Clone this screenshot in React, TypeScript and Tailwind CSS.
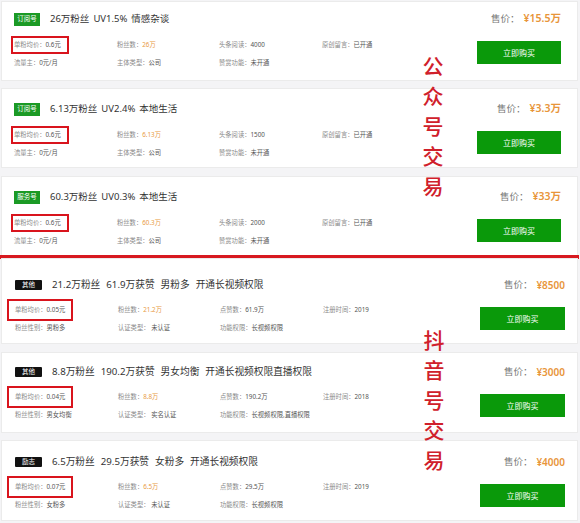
import React from 'react';

interface Cell {
  label: string;
  value: string;
  orange?: boolean;
  boxed?: boolean;
}

interface Listing {
  tag: string;
  tagClass: string;
  title: string[];
  price: string;
  rows: Cell[][];
  cardClass: string;
}

const wechat: Listing[] = [
  {
    tag: '订阅号',
    tagClass: 'bg-[#1b9a25] h-[13px] w-[26px]',
    title: ['26万粉丝', 'UV1.5%', '情感杂谈'],
    price: '¥15.5万',
    cardClass: 'pt-[11px] pb-[12px]',
    rows: [
      [
        { label: '单粉均价：', value: '0.6元', boxed: true },
        { label: '粉丝数：', value: '26万', orange: true },
        { label: '头条阅读：', value: '4000' },
        { label: '原创留言：', value: '已开通' },
      ],
      [
        { label: '流量主：', value: '0元/月' },
        { label: '主体类型：', value: '公司' },
        { label: '赞赏功能：', value: '未开通' },
      ],
    ],
  },
  {
    tag: '订阅号',
    tagClass: 'bg-[#1b9a25] h-[13px] w-[26px]',
    title: ['6.13万粉丝', 'UV2.4%', '本地生活'],
    price: '¥3.3万',
    cardClass: 'mt-[9px] pt-[14px] pb-[9px]',
    rows: [
      [
        { label: '单粉均价：', value: '0.6元', boxed: true },
        { label: '粉丝数：', value: '6.13万', orange: true },
        { label: '头条阅读：', value: '1500' },
        { label: '原创留言：', value: '已开通' },
      ],
      [
        { label: '流量主：', value: '0元/月' },
        { label: '主体类型：', value: '公司' },
        { label: '赞赏功能：', value: '未开通' },
      ],
    ],
  },
  {
    tag: '服务号',
    tagClass: 'bg-[#1b9a25] h-[13px] w-[26px]',
    title: ['60.3万粉丝', 'UV0.3%', '本地生活'],
    price: '¥33万',
    cardClass: 'mt-[10px] pt-[14px] pb-[9px]',
    rows: [
      [
        { label: '单粉均价：', value: '0.6元', boxed: true },
        { label: '粉丝数：', value: '60.3万', orange: true },
        { label: '头条阅读：', value: '2000' },
        { label: '原创留言：', value: '已开通' },
      ],
      [
        { label: '流量主：', value: '0元/月' },
        { label: '主体类型：', value: '公司' },
        { label: '赞赏功能：', value: '未开通' },
      ],
    ],
  },
];

const douyin: Listing[] = [
  {
    tag: '其他',
    tagClass: 'bg-[#111] h-[10px] w-[27px] rounded-[1px]',
    title: ['21.2万粉丝', '61.9万获赞', '男粉多', '开通长视频权限'],
    price: '¥8500',
    cardClass: 'pt-[20px] pb-[10px]',
    rows: [
      [
        { label: '单粉均价：', value: '0.05元', boxed: true },
        { label: '粉丝数：', value: '21.2万', orange: true },
        { label: '点赞数：', value: '61.9万' },
        { label: '注册时间：', value: '2019' },
      ],
      [
        { label: '粉丝性别：', value: '男粉多' },
        { label: '认证类型： ', value: '未认证' },
        { label: '功能权限：', value: '长视频权限' },
      ],
    ],
  },
  {
    tag: '其他',
    tagClass: 'bg-[#111] h-[10px] w-[27px] rounded-[1px]',
    title: ['8.8万粉丝', '190.2万获赞', '男女均衡', '开通长视频权限直播权限'],
    price: '¥3000',
    cardClass: 'mt-[10px] pt-[13px] pb-[12px]',
    rows: [
      [
        { label: '单粉均价：', value: '0.04元', boxed: true },
        { label: '粉丝数：', value: '8.8万', orange: true },
        { label: '点赞数：', value: '190.2万' },
        { label: '注册时间：', value: '2018' },
      ],
      [
        { label: '粉丝性别：', value: '男女均衡' },
        { label: '认证类型： ', value: '实名认证' },
        { label: '功能权限：', value: '长视频权限,直播权限' },
      ],
    ],
  },
  {
    tag: '励志',
    tagClass: 'bg-[#111] h-[10px] w-[27px] rounded-[1px]',
    title: ['6.5万粉丝', '29.5万获赞', '女粉多', '开通长视频权限'],
    price: '¥4000',
    cardClass: 'mt-[9px] pt-[15px] pb-[10px]',
    rows: [
      [
        { label: '单粉均价：', value: '0.07元', boxed: true },
        { label: '粉丝数：', value: '6.5万', orange: true },
        { label: '点赞数：', value: '29.5万' },
        { label: '注册时间：', value: '2019' },
      ],
      [
        { label: '粉丝性别：', value: '女粉多' },
        { label: '认证类型： ', value: '未认证' },
        { label: '功能权限：', value: '长视频权限' },
      ],
    ],
  },
];

const ListingCard: React.FC<{ item: Listing; variant: 'wechat' | 'douyin' }> = ({ item, variant }) => {
  const isWechat = variant === 'wechat';
  return (
    <div
      className={`flex items-start bg-white shadow-[0_0_0_1px_#ebebeb] ${item.cardClass} ${
        isWechat ? 'pl-[12px] pr-[16px]' : 'pl-[13px] pr-[12px]'
      }`}
    >
      {/* Left: title + attributes */}
      <div className="flex-1 min-w-0">
        <div className="h-[12px] flex items-center gap-[10px]">
          <span
            className={`${item.tagClass} flex items-center justify-center text-white text-[6.5px] leading-none shrink-0`}
          >
            {item.tag}
          </span>
          <span
            className={`flex items-center text-[#333] whitespace-nowrap ${
              isWechat ? 'text-[9.5px] gap-[4px]' : 'text-[9.7px] gap-[6px]'
            }`}
          >
            {item.title.map((t) => (
              <span key={t}>{t}</span>
            ))}
          </span>
        </div>
        <div
          className={`grid grid-cols-[103px_102px_103px_auto] gap-y-[8px] text-[6.3px] leading-[10px] whitespace-pre ${
            isWechat ? 'mt-[15px]' : 'mt-[14px]'
          }`}
        >
          {item.rows.map((row, ri) =>
            [0, 1, 2, 3].map((ci) => {
              const cell = row[ci];
              if (!cell) return <span key={`${ri}-${ci}`} />;
              return (
                <span key={`${ri}-${ci}`}>
                  <span className="relative inline-block">
                    <span className="text-[#8a8a8a]">{cell.label}</span>
                    <span className={cell.orange ? 'text-[#e89a3f]' : 'text-[#555]'}>{cell.value}</span>
                    {cell.boxed && (
                      <span
                        className={`absolute border-[2.5px] border-[#d9141d] ${
                          isWechat
                            ? '-left-[3px] -right-[8px] -top-[4px] -bottom-[4px]'
                            : '-left-[8px] -right-[8px] -top-[6px] -bottom-[6px]'
                        }`}
                      />
                    )}
                  </span>
                </span>
              );
            })
          )}
        </div>
      </div>

      {/* Right: price + buy button */}
      <div className="flex flex-col items-end shrink-0">
        <div className="h-[12px] flex items-center gap-[4px] whitespace-nowrap">
          <span className="text-[9.5px] text-[#777]">售价：</span>
          <span
            className={`font-semibold text-[#e8953a] ${isWechat ? 'text-[10.5px]' : 'text-[10px]'}`}
          >
            {item.price}
          </span>
        </div>
        <button
          className={`mt-[16px] h-[23px] bg-[#0a990a] text-white text-[8px] flex items-center justify-center ${
            isWechat ? 'w-[84px]' : 'w-[85px]'
          }`}
        >
          立即购买
        </button>
      </div>
    </div>
  );
};

const VerticalLabel: React.FC<{ text: string; className: string }> = ({ text, className }) => (
  <div
    className={`absolute w-[30px] flex flex-col items-center text-[21px] font-medium leading-[30px] text-[#d0202b] pointer-events-none ${className}`}
  >
    {text.split('').map((ch, i) => (
      <span key={i}>{ch}</span>
    ))}
  </div>
);

export default function App() {
  return (
    <div className="relative w-[580px] h-[523px] overflow-hidden bg-[#f4f4f6] font-['Noto_Sans','Noto_Sans_CJK_SC',sans-serif]">
      <div className="pt-[2px] pl-[2px] pr-[3px] flex flex-col">
        {/* 公众号 listings */}
        {wechat.map((item, i) => (
          <ListingCard key={i} item={item} variant="wechat" />
        ))}

        {/* section divider */}
        <div className="-mx-[2px] h-[4px] bg-[#d7191f]" />

        {/* 抖音号 listings */}
        {douyin.map((item, i) => (
          <ListingCard key={i} item={item} variant="douyin" />
        ))}
      </div>

      <VerticalLabel text="公众号交易" className="left-[418px] top-[51px]" />
      <VerticalLabel text="抖音号交易" className="left-[419px] top-[325px]" />
    </div>
  );
}
